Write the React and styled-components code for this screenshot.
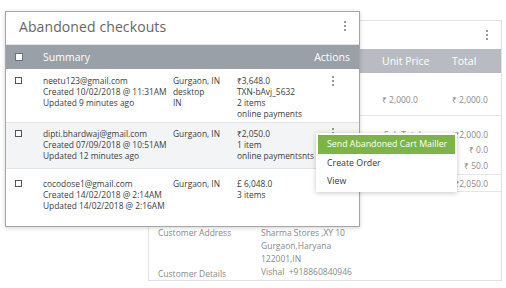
import React from "react";
import styled, { createGlobalStyle } from "styled-components";

const Global = createGlobalStyle`
  html, body { margin: 0; padding: 0; background: #fff; }
  body { font-family: "Open Sans", "Noto Sans", "DejaVu Sans", sans-serif; }
  * { box-sizing: border-box; }
`;

const Stage = styled.div`
  position: relative;
  width: 506px;
  height: 288px;
  overflow: hidden;
  display: flex;
  align-items: flex-start;
  padding: 20px 0 0 148px;
`;

/* ---------- back card ---------- */
const BackCard = styled.div`
  width: 354px;
  height: 261px;
  border: 1px solid #e2e2e2;
  background: #fff;
  display: flex;
  flex-direction: column;
  color: #8a8a8a;
  font-size: 8.5px;
`;

const BackTop = styled.div`
  height: 28px;
  display: flex;
  align-items: center;
  justify-content: flex-end;
  padding-right: 11px;
`;

const BackHead = styled.div`
  height: 24px;
  background: #b8bcc2;
  color: #fff;
  font-size: 10.5px;
  font-weight: 500;
  display: grid;
  grid-template-columns: 233px 70px 1fr;
  align-items: center;
`;

const BackItem = styled.div`
  height: 44px;
  border-bottom: 1px solid #e6e6e6;
  display: grid;
  grid-template-columns: 233px 70px 1fr;
  padding-top: 21px;
`;

const Totals = styled.div`
  display: grid;
  grid-template-columns: 233px 1fr;
  grid-auto-rows: 15.5px;
  align-items: center;
  padding: 10px 13px 0 0;
  height: 59px;
  border-bottom: 1px solid #e6e6e6;
`;

const Value = styled.span`
  text-align: right;
`;

const SubLabel = styled.span`
  float: left;
  margin-left: 2px;
`;

const TotalRow = styled.div`
  height: 17px;
  border-bottom: 1px solid #e6e6e6;
  display: flex;
  align-items: center;
  justify-content: flex-end;
  padding-right: 13px;
`;

const Customer = styled.div`
  display: grid;
  grid-template-columns: 103px 1fr;
  padding: 34px 0 0 9px;
  line-height: 13px;
`;

const Label = styled.div`
  color: #8a8a8a;
  padding-top: ${(p) => p.$top || 0}px;
`;

const Dim = styled.span`
  grid-column: 2;
  text-align: left;
`;

/* ---------- front card ---------- */
const FrontCard = styled.div`
  position: absolute;
  left: 5px;
  top: 11px;
  width: 355px;
  background: #fff;
  border: 1px solid #a6a6a6;
  box-shadow: 0 1px 4px rgba(0, 0, 0, 0.18);
  display: flex;
  flex-direction: column;
`;

const TitleBar = styled.div`
  height: 33px;
  border-bottom: 1px solid #e4e4e4;
  display: flex;
  align-items: center;
  justify-content: space-between;
  padding: 0 11px 4px 13px;
`;

const Title = styled.h1`
  margin: 0;
  font-size: 14px;
  font-weight: 500;
  color: #666;
  letter-spacing: 0.1px;
`;

const HeadRow = styled.div`
  height: 24px;
  background: #9aa0a8;
  color: #fff;
  font-size: 10.5px;
  font-weight: 500;
  display: grid;
  grid-template-columns: 37px 1fr auto;
  align-items: center;
  padding-right: 9px;
`;

const Row = styled.div`
  position: relative;
  height: ${(p) => p.$h}px;
  padding-top: ${(p) => p.$pt}px;
  background: ${(p) => (p.$shade ? "#f3f4f6" : "#fff")};
  border-bottom: ${(p) => (p.$last ? "none" : "1px solid #e3e3e3")};
  display: grid;
  grid-template-columns: 37px 130px 64px 88px 1fr;
  align-items: start;
  color: #3d3d3d;
  font-size: 8.4px;
  line-height: 11px;
`;

const Cell = styled.div`
  display: flex;
  flex-direction: column;
  white-space: nowrap;
`;

const Box = styled.span`
  display: block;
  width: ${(p) => (p.$head ? 8 : 7)}px;
  height: ${(p) => (p.$head ? 8 : 7)}px;
  margin: ${(p) => (p.$head ? "0 0 0 9px" : "2px 0 0 9px")};
  border: 1px solid ${(p) => (p.$head ? "#6d7278" : "#555")};
  background: #fff;
`;

const KebabWrap = styled.span`
  display: inline-flex;
  flex-direction: column;
  gap: 2px;
  padding: 1px 2px;
  margin-left: ${(p) => p.$ml || 0}px;
  margin-top: ${(p) => p.$mt || 0}px;
`;

const Dot = styled.span`
  width: 2px;
  height: 2px;
  border-radius: 50%;
  background: #777;
`;

const Kebab = ({ ml, mt }) => (
  <KebabWrap $ml={ml} $mt={mt}>
    <Dot />
    <Dot />
    <Dot />
  </KebabWrap>
);

const Menu = styled.ul`
  position: absolute;
  left: 310px;
  top: 10px;
  width: 141px;
  margin: 0;
  padding: 2px;
  list-style: none;
  background: #fff;
  box-shadow: 0 1px 5px rgba(0, 0, 0, 0.22);
  z-index: 2;
`;

const MenuItem = styled.li`
  height: ${(p) => (p.$active ? 19 : 18)}px;
  display: flex;
  align-items: center;
  padding-left: 9px;
  font-size: 8.8px;
  color: ${(p) => (p.$active ? "#fff" : "#3a3a3a")};
  background: ${(p) => (p.$active ? "#7db544" : "transparent")};
`;

const rows = [
  {
    h: 54,
    pt: 6,
    summary: ["neetu123@gmail.com", "Created 10/02/2018 @ 11:31AM", "Updated 9 minutes ago"],
    loc: ["Gurgaon, IN", "desktop", "IN"],
    amt: ["₹3,648.0", "TXN-bAvj_5632", "2 items", "online payments"],
    kebabMt: 0,
  },
  {
    h: 46,
    pt: 5,
    shade: true,
    summary: ["dipti.bhardwaj@gmail.com", "Created 07/09/2018 @ 10:51AM", "Updated 12 minutes ago"],
    loc: ["Gurgaon, IN"],
    amt: ["₹2,050.0", "1 item", "online paymentsnts"],
    menu: true,
    kebabMt: -1,
  },
  {
    h: 57,
    pt: 9,
    last: true,
    summary: ["cocodose1@gmail.com", "Created 14/02/2018 @ 2:14AM", "Updated 14/02/2018 @ 2:16AM"],
    loc: ["Gurgaon, IN"],
    amt: ["£ 6,048.0", "3 items"],
    kebabMt: 0,
  },
];

export default function App() {
  return (
    <>
      <Global />
      <Stage>
        <BackCard>
          <BackTop>
            <Kebab />
          </BackTop>
          <BackHead>
            <span />
            <span>Unit Price</span>
            <span>Total</span>
          </BackHead>
          <BackItem>
            <span />
            <span>₹ 2,000.0</span>
            <span>₹ 2,000.0</span>
          </BackItem>
          <Totals>
            <span />
            <Value>
              <SubLabel>Sub Total</SubLabel>₹2,000.0
            </Value>
            <span />
            <Value>₹ 0.0</Value>
            <span />
            <Value>₹ 50.0</Value>
          </Totals>
          <TotalRow>₹2,050.0</TotalRow>
          <Customer>
            <Label>Customer Address</Label>
            <Dim>Sharma Stores ,XY 10</Dim>
            <Dim>Gurgaon,Haryana</Dim>
            <Dim>122001,IN</Dim>
            <Label $top={2}>Customer Details</Label>
            <span>Vishal&nbsp; +918860840946</span>
          </Customer>
        </BackCard>

        <FrontCard>
          <TitleBar>
            <Title>Abandoned checkouts</Title>
            <Kebab />
          </TitleBar>
          <HeadRow>
            <Box $head />
            <span>Summary</span>
            <span>Actions</span>
          </HeadRow>
          {rows.map((r, i) => (
            <Row key={i} $h={r.h} $pt={r.pt} $shade={r.shade} $last={r.last}>
              <Box />
              <Cell>
                {r.summary.map((t) => (
                  <span key={t}>{t}</span>
                ))}
              </Cell>
              <Cell>
                {r.loc.map((t, j) => (
                  <span key={j}>{t}</span>
                ))}
              </Cell>
              <Cell>
                {r.amt.map((t) => (
                  <span key={t}>{t}</span>
                ))}
              </Cell>
              <Cell>
                <Kebab ml={5} mt={r.kebabMt} />
              </Cell>
              {r.menu && (
                <Menu>
                  <MenuItem $active>Send Abandoned Cart Mailler</MenuItem>
                  <MenuItem>Create Order</MenuItem>
                  <MenuItem>View</MenuItem>
                </Menu>
              )}
            </Row>
          ))}
        </FrontCard>
      </Stage>
    </>
  );
}
